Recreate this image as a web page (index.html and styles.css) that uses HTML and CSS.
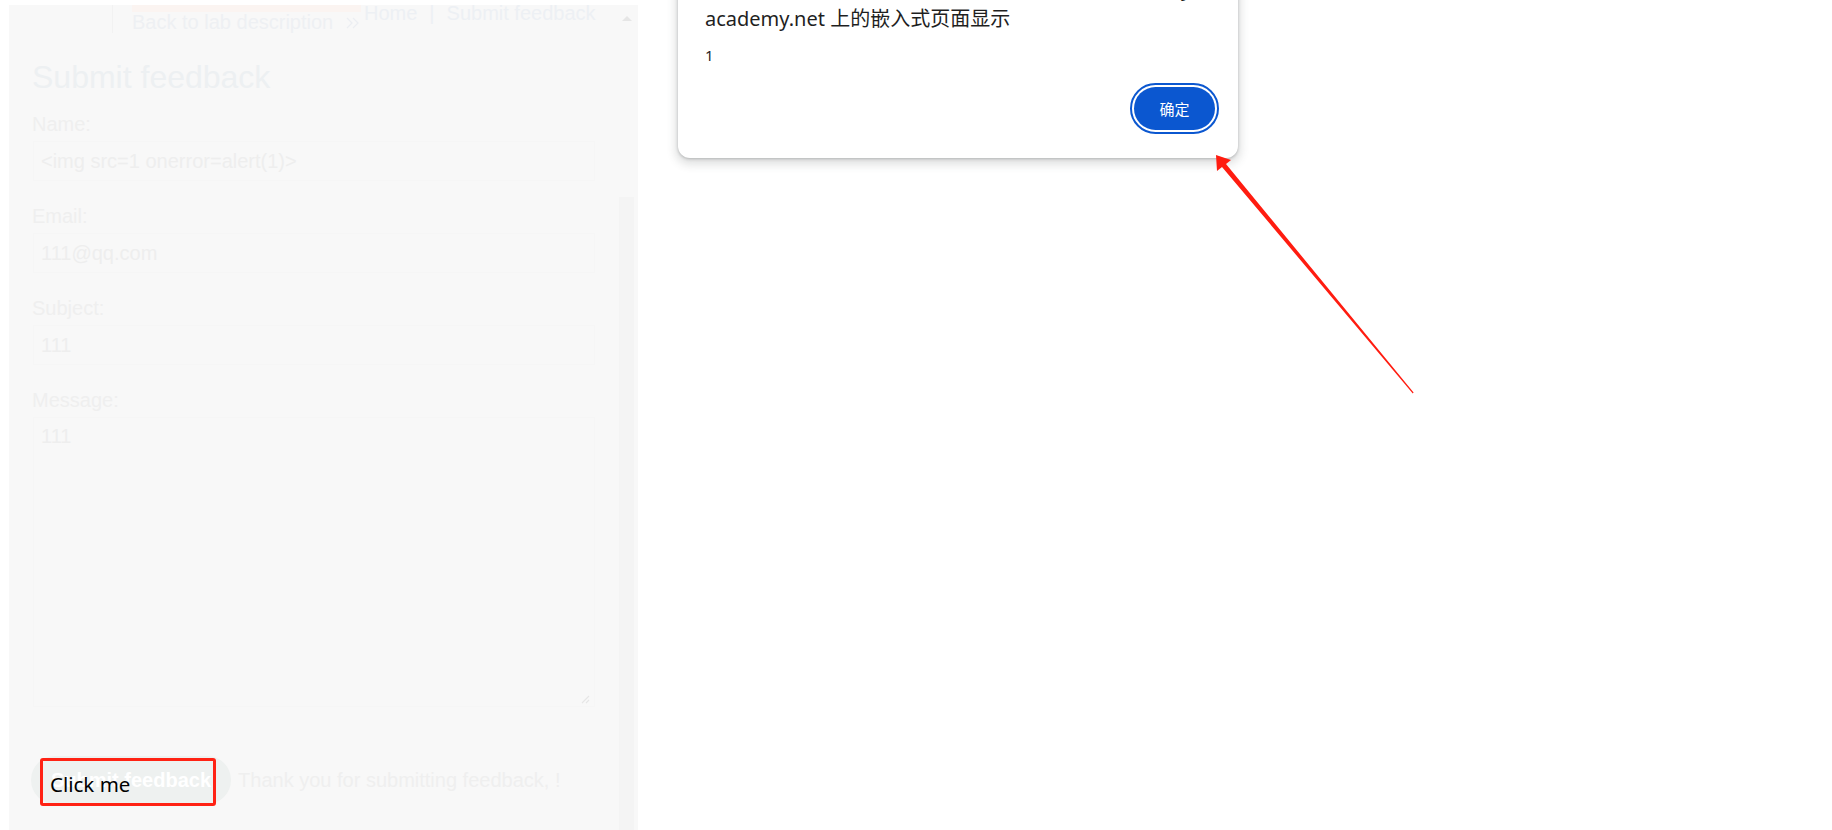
FILE: index.html
```html
<!DOCTYPE html>
<html lang="zh-CN">
<head>
<meta charset="utf-8">
<title>Clickjacking</title>
<link rel="stylesheet" href="styles.css">
</head>
<body>
<div class="page">
  <div class="frame">
    <div class="frame-body">
      <header class="lab-header">
        <div class="logo-cell"></div>
        <div class="back">
          <div class="status-bar"></div>
          <div class="back-link">
            <span>Back to lab description</span>
            <svg class="chev" width="14" height="12" viewBox="0 0 14 12"><path d="M1 1 L6 6 L1 11 M7 1 L12 6 L7 11" fill="none" stroke="#eceef2" stroke-width="1.3"/></svg>
          </div>
        </div>
        <nav class="nav">
          <span>Home</span><span class="sep">|</span><span>Submit feedback</span>
        </nav>
      </header>
      <main class="content">
        <h1 class="title">Submit feedback</h1>
        <div class="form">
          <div class="label">Name:</div>
          <div class="field">&lt;img src=1 onerror=alert(1)&gt;</div>
          <div class="label">Email:</div>
          <div class="field">111@qq.com</div>
          <div class="label">Subject:</div>
          <div class="field">111</div>
          <div class="label">Message:</div>
          <div class="textarea">111
            <svg class="resize" width="9" height="9" viewBox="0 0 9 9"><path d="M1 8 L8 1 M5 8 L8 5" stroke="#e6e6e6" stroke-width="1.2"/></svg>
          </div>
          <div class="actions">
            <span class="submit-btn">Submit feedback</span>
            <span class="thanks">Thank you for submitting feedback, !</span>
          </div>
        </div>
      </main>
    </div>
    <div class="scrollbar">
      <div class="sb-up"><span class="sb-arrow"></span></div>
      <div class="sb-track"></div>
      <div class="sb-thumb"></div>
    </div>
  </div>
</div>

<div class="click-me">Click me</div>

<div class="dialog">
  <div class="dialog-title"><span class="host">0a8c00b5046e2e5780d1d5a3000f0057.web-security-</span><br>academy.net 上的嵌入式页面显示</div>
  <div class="dialog-msg">1</div>
  <div class="dialog-actions"><button class="ok-btn">确定</button></div>
</div>

<svg class="arrow" width="1832" height="830" viewBox="0 0 1832 830">
  <polygon points="1216,155 1231,160 1226,164 1413.6,392.4 1412.8,393.4 1222,167 1217,171" fill="#ff1c10"/>
</svg>
</body>
</html>
```

FILE: styles.css
```css
* { box-sizing: border-box; }
html, body { margin: 0; padding: 0; background: #ffffff; }
body {
  width: 1832px;
  height: 830px;
  overflow: hidden;
  position: relative;
  font-family: "Liberation Sans", Arial, sans-serif;
}

.page { padding: 5px 0 0 9px; }

.frame {
  width: 629px;
  height: 825px;
  background: #f8f8f8;
  display: flex;
  padding-right: 3px;
}

.frame-body { flex: 1; min-width: 0; }

/* header */
.lab-header {
  display: flex;
  align-items: flex-start;
  height: 54px;
  font-size: 20px;
  color: #eef0f3;
}
.logo-cell {
  width: 104px;
  height: 28px;
  border-right: 1px solid #f2f2f2;
}
.back { margin-left: 19px; width: 229px; }
.status-bar { height: 7px; background: #fbf4f1; }
.back-link {
  display: flex;
  align-items: center;
  gap: 13px;
  height: 20px;
  line-height: 20px;
  white-space: nowrap;
}
.chev { margin-top: 2px; }
.nav {
  margin-left: 3px;
  display: flex;
  line-height: 17px;
  white-space: nowrap;
  color: #edf0f4;
}
.sep { margin: 0 12px; }

/* content */
.content { padding: 0 23px; }
.title {
  margin: 0;
  font-size: 32px;
  line-height: 36px;
  font-weight: normal;
  color: #edf0f2;
}
.form { margin-top: 18px; font-size: 20px; }
.label {
  line-height: 23px;
  color: #efefef;
  margin-bottom: 5px;
}
.field {
  margin-left: 1px;
  height: 40px;
  line-height: 38px;
  padding: 0 7px;
  border: 1px solid #f6f6f6;
  color: #eeeeee;
  margin-bottom: 24px;
  white-space: nowrap;
}
.textarea {
  position: relative;
  margin-left: 1px;
  height: 290px;
  padding: 7px;
  line-height: 23px;
  border: 1px solid #f6f6f6;
  color: #eeeeee;
}
.resize { position: absolute; right: 4px; bottom: 2px; }

.actions {
  margin-top: 49px;
  margin-left: -1px;
  display: flex;
  align-items: center;
}
.submit-btn {
  height: 48px;
  line-height: 48px;
  padding: 0 20px;
  border-radius: 24px;
  background: #eef1f0;
  color: #ffffff;
  font-weight: bold;
  white-space: nowrap;
}
.thanks {
  margin-left: 7px;
  color: #efefef;
  white-space: nowrap;
}

/* scrollbar */
.scrollbar {
  width: 17px;
  display: flex;
  flex-direction: column;
}
.sb-up {
  height: 26px;
  display: flex;
  align-items: center;
  justify-content: center;
}
.sb-arrow {
  width: 0;
  height: 0;
  border-left: 5px solid transparent;
  border-right: 5px solid transparent;
  border-bottom: 5px solid #e6e6e6;
  margin-top: 1px;
}
.sb-track { height: 166px; }
.sb-thumb { flex: 1; margin: 0 1px; background: #f4f4f4; }

/* decoy */
.click-me {
  position: absolute;
  left: 40px;
  top: 758px;
  width: 176px;
  height: 48px;
  border: 3px solid #ff2214;
  border-radius: 3px;
  padding: 9px 0 0 7px;
  font-family: "Noto Sans", "Open Sans", sans-serif;
  font-size: 20.5px;
  line-height: 28px;
  color: #000000;
}

/* alert dialog */
.dialog {
  position: absolute;
  left: 678px;
  top: -50px;
  width: 560px;
  padding: 24px 23px 28px 27px;
  background: #ffffff;
  border-radius: 12px;
  box-shadow: 0 1px 3px rgba(60, 64, 67, 0.3), 0 4px 8px 3px rgba(60, 64, 67, 0.15);
  font-family: "Noto Sans", "Noto Sans CJK SC", sans-serif;
  color: #1f1f1f;
}
.dialog-title {
  font-size: 20px;
  line-height: 30px;
}
.host { white-space: nowrap; }
.dialog-msg {
  margin-top: 11px;
  font-size: 15px;
  line-height: 20px;
}
.dialog-actions {
  margin-top: 22px;
  display: flex;
  justify-content: flex-end;
}
.ok-btn {
  width: 81px;
  height: 43px;
  border: none;
  border-radius: 22px;
  background: #0b57d0;
  color: #ffffff;
  font-family: "Noto Sans CJK SC", sans-serif;
  font-size: 15px;
  outline: 2px solid #0b57d0;
  outline-offset: 2px;
  padding: 0;
}

.arrow {
  position: absolute;
  left: 0;
  top: 0;
  pointer-events: none;
}
```
